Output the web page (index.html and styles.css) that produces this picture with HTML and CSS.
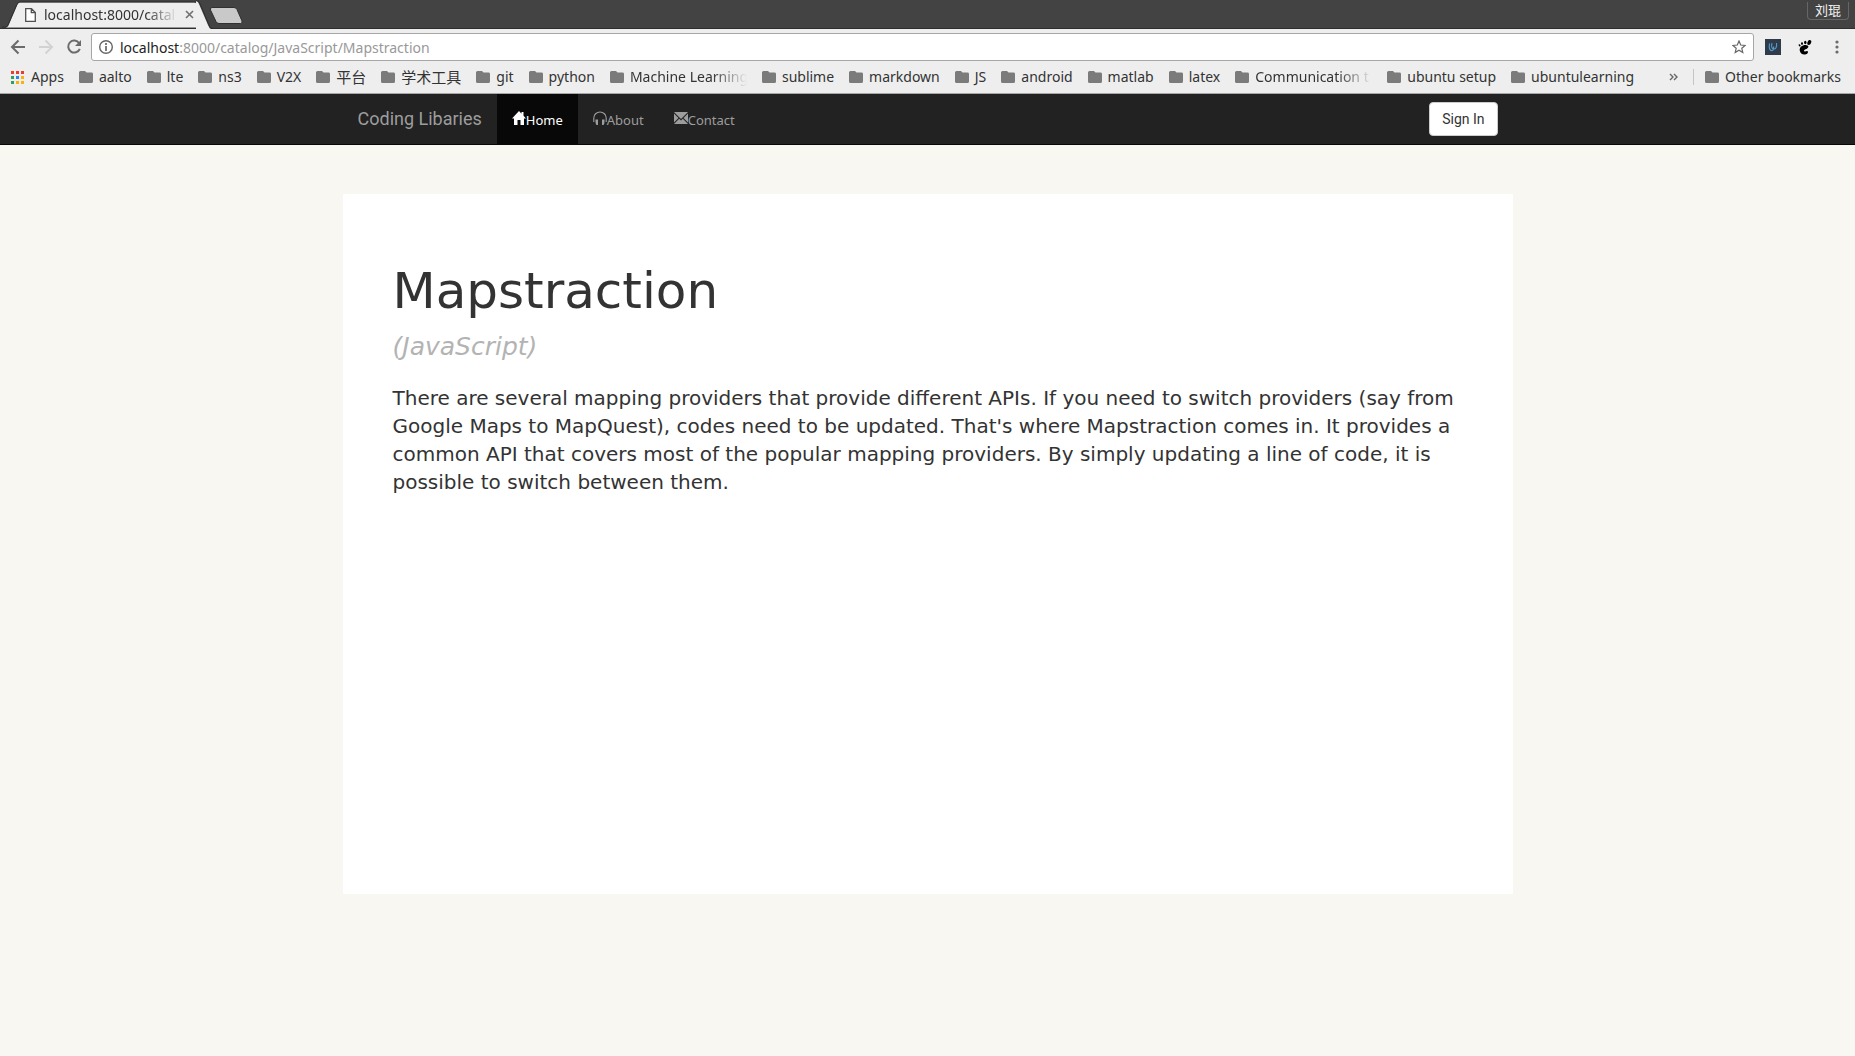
FILE: index.html
```html
<!DOCTYPE html>
<html lang="en">
<head>
<meta charset="utf-8">
<title>localhost:8000/catalog/JavaScript/Mapstraction</title>
<link rel="stylesheet" href="styles.css">
</head>
<body>
<svg class="defs" aria-hidden="true">
  <symbol id="folder" viewBox="0 0 14 12"><path d="M0 1.5Q0 0 1.5 0H6l1.5 1.6h5Q14 1.6 14 3v7.5q0 1.5-1.5 1.5h-11Q0 12 0 10.5z" fill="#7b7b7b"/></symbol>
</svg>
<header class="browser">
  <div class="tabstrip">
    <div class="tab">
      <svg class="tab-shape" width="216" height="29" viewBox="0 0 216 29"><path d="M4 29C7 28 7 27 8 25L17 4Q18 1 20 1H214Q216 1 217 4V29z" fill="#eee"/><path d="M0 28.500H4Q6 28 7 25L16.500 3.500Q18 .5 20 .5H216" fill="none" stroke="#2e2e2e"/></svg>
      <svg class="tab-end" width="20" height="29" viewBox="0 0 20 29"><path d="M0 1H18Q2 1 3 4L12 25Q13 28 15 29H0z" fill="none"/><path d="M0 1Q2 1 3 4L12 25Q13 28 15 29H0z" fill="#eee"/><path d="M0 .5Q3 .5 4 3.500L13 25Q14 28 16 28.500H20" fill="none" stroke="#2e2e2e"/></svg>
      <svg class="doc" width="11" height="14" viewBox="0 0 11 14"><path d="M.7.7H6.500L10.300 4.500V13.300H.7zM6.300.7V4.700H10.300" fill="#fff" stroke="#505050" stroke-width="1.300"/></svg>
      <span class="tab-title">localhost:8000/catal</span>
      <button class="close" aria-label="Close tab"><svg width="9" height="9" viewBox="0 0 9 9"><path d="M1 1l7 7M8 1l-7 7" stroke="#707070" stroke-width="1.600"/></svg></button>
    </div>
    <button class="newtab" aria-label="New tab"><svg width="34" height="17" viewBox="0 0 34 17"><path d="M3 .5H25Q27 .5 28 2.500L33 14Q33.500 16.500 31.500 16.500H10Q8 16.500 7 14.500L1.500 3Q1 .5 3 .5z" fill="#c9c9c9" stroke="#303030"/></svg></button>
    <button class="profile">刘琨</button>
  </div>
  <div class="toolbar">
    <div class="controls">
      <button aria-label="Back"><svg width="16" height="16" viewBox="0 0 16 16"><path d="M15 8H2.500M8.500 1.500L2 8l6.500 6.500" fill="none" stroke="#6b6b6b" stroke-width="2"/></svg></button>
      <button aria-label="Forward"><svg width="16" height="16" viewBox="0 0 16 16"><path d="M1 8h12.500M7.500 1.500L14 8l-6.500 6.500" fill="none" stroke="#d2d2d2" stroke-width="2"/></svg></button>
      <button aria-label="Reload"><svg width="16" height="16" viewBox="0 0 16 16"><path d="M13.200 4.200A6 6 0 1 0 13.800 9.800" fill="none" stroke="#6b6b6b" stroke-width="2"/><path d="M15 1v6H9z" fill="#6b6b6b"/></svg></button>
    </div>
    <div class="omnibox">
      <svg width="14" height="14" viewBox="0 0 14 14"><circle cx="7" cy="7" r="6.300" fill="none" stroke="#666" stroke-width="1.400"/><path d="M7 6v5M7 3v2" stroke="#666" stroke-width="1.700"/></svg>
      <label for="url">localhost</label><input id="url" type="text" value=":8000/catalog/JavaScript/Mapstraction">
      <button aria-label="Bookmark this page"><svg width="14" height="14" viewBox="0 0 14 14"><path d="M7 1l1.700 4 4.400.4-3.300 2.900 1 4.300L7 10.300l-3.800 2.300 1-4.300L.9 5.400 5.300 5z" fill="none" stroke="#666" stroke-width="1.200"/></svg></button>
    </div>
    <div class="controls extensions">
      <button aria-label="Udacity"><svg width="16" height="16" viewBox="0 0 16 16"><path d="M0 0h16v16H0z" fill="#303b49"/><path d="M4.500 4.500C4 8 4 11 6.300 11.500C8.500 12 9 9.500 8.500 7.500M7 4c-.8 3-.5 5.500 1.500 6C11 10.500 12 7.500 11.500 4" fill="none" stroke="#4f9bcc" stroke-width="1.100"/></svg></button>
      <button aria-label="GNOME"><svg width="14" height="15" viewBox="0 0 14 15"><path d="M8.500 5.200C5 4.500 1.300 7 1.700 10.300c.3 3 3 4.700 5.500 4.200 2.300-.4 3.300-2 2.500-3.200-.8-1-1.900.5-3 .2-1.200-.5-.7-1.700.8-2.200C10 8.500 12 5.800 8.500 5.200z"/><ellipse cx="11.300" cy="2.500" rx="1.800" ry="2.600" transform="rotate(25 11.300 2.500)"/><ellipse cx="7.300" cy="2.500" rx="1.200" ry="1.800"/><ellipse cx="4" cy="3.600" rx="1" ry="1.400"/><ellipse cx="1.600" cy="5.400" rx=".9" ry="1.200" transform="rotate(-30 1.600 5.400)"/></svg></button>
      <button aria-label="Menu"><svg width="4" height="14" viewBox="0 0 4 14" fill="#6b6b6b"><circle cx="2" cy="2" r="1.600"/><circle cx="2" cy="7" r="1.600"/><circle cx="2" cy="12" r="1.600"/></svg></button>
    </div>
  </div>
  <nav class="bookmarks" aria-label="Bookmarks">
    <a class="apps" href="#"><svg width="13" height="13" viewBox="0 0 13 13"><path d="M0 0h3v3H0zM5 0h3v3H5zM10 0h3v3h-3z" fill="#ee3b30"/><path d="M0 5h3v3H0zM0 10h3v3H0z" fill="#2da05a"/><path d="M5 5h3v3H5z" fill="#2c86ee"/><path d="M10 5h3v3h-3zM5 10h3v3H5zM10 10h3v3h-3z" fill="#fbb10b"/></svg>Apps</a>
    <a href="#"><svg><use href="#folder"/></svg>aalto</a>
    <a href="#"><svg><use href="#folder"/></svg>lte</a>
    <a href="#"><svg><use href="#folder"/></svg>ns3</a>
    <a href="#"><svg><use href="#folder"/></svg>V2X</a>
    <a href="#"><svg><use href="#folder"/></svg><span class="cjk">平台</span></a>
    <a href="#"><svg><use href="#folder"/></svg><span class="cjk">学术工具</span></a>
    <a href="#"><svg><use href="#folder"/></svg>git</a>
    <a href="#"><svg><use href="#folder"/></svg>python</a>
    <a href="#"><svg><use href="#folder"/></svg><span class="long">Machine Learning</span></a>
    <a href="#"><svg><use href="#folder"/></svg>sublime</a>
    <a href="#"><svg><use href="#folder"/></svg>markdown</a>
    <a href="#"><svg><use href="#folder"/></svg>JS</a>
    <a href="#"><svg><use href="#folder"/></svg>android</a>
    <a href="#"><svg><use href="#folder"/></svg>matlab</a>
    <a href="#"><svg><use href="#folder"/></svg>latex</a>
    <a href="#"><svg><use href="#folder"/></svg><span class="long">Communication t</span></a>
    <a href="#"><svg><use href="#folder"/></svg>ubuntu setup</a>
    <a href="#"><svg><use href="#folder"/></svg>ubuntulearning</a>
    <button class="more" aria-label="More bookmarks"><svg width="9" height="8" viewBox="0 0 9 8"><path d="M1 1l3 3-3 3M5 1l3 3-3 3" fill="none" stroke="#666" stroke-width="1.400"/></svg></button>
    <a class="other" href="#"><svg><use href="#folder"/></svg>Other bookmarks</a>
  </nav>
</header>
<nav class="navbar" aria-label="Main">
  <div class="container">
    <a class="brand" href="#">Coding Libaries</a>
    <ul class="menu">
      <li><a class="active" href="#"><svg width="14" height="14" viewBox="0 0 14 14"><path d="M7 0L0 7.500h2V14h3.500V9h3v5H12V7.500h2L11.500 4.800V1h-2v1.700z"/></svg>Home</a></li>
      <li><a href="#"><svg width="14" height="14" viewBox="0 0 14 14"><path d="M.8 11V7a6.200 6 0 0 1 12.400 0v4" fill="none" stroke="currentColor" stroke-width="1.100"/><path d="M2.500 8.500H5V14H3.500Q2.500 13 2.500 11zM9 8.500h2.500V11q0 2-1 3H9z"/></svg>About</a></li>
      <li><a href="#"><svg width="14" height="14" viewBox="0 0 14 14"><path d="M0 1h14L7 8zM0 2.500L4.500 7 0 11.500zM14 2.500L9.500 7l4.500 4.500zM0 13l5.200-5.300L7 9.500l1.800-1.800L14 13z"/></svg>Contact</a></li>
    </ul>
    <button class="signin">Sign In</button>
  </div>
</nav>
<main class="card">
  <h1>Mapstraction</h1>
  <p class="language">(JavaScript)</p>
  <p class="description">There are several mapping providers that provide different APIs. If you need to switch providers (say from Google Maps to MapQuest), codes need to be updated. That's where Mapstraction comes in. It provides a common API that covers most of the popular mapping providers. By simply updating a line of code, it is possible to switch between them.</p>
</main>
</body>
</html>
```
FILE: styles.css
```css
* { box-sizing: border-box; }
body { margin: 0; background: #f8f7f2; color: #333; font-family: "DejaVu Sans", sans-serif; }
button { margin: 0; padding: 0; border: 0; background: none; font: inherit; color: inherit; }
a { color: inherit; text-decoration: none; }
svg { display: block; flex: none; }
.defs { position: absolute; width: 0; height: 0; }

.browser { background: #eee; font-family: "Noto Sans", "Noto Sans CJK SC", sans-serif; font-size: 14px; border-bottom: 1px solid #a6a6a6; }
.tabstrip { display: flex; height: 29px; background: #434343; border-bottom: 1px solid #2e2e2e; }
.tab { position: relative; display: flex; align-items: center; width: 209px; height: 29px; padding-left: 25px; }
.tab-shape, .tab-end { position: absolute; top: 0; left: 2px; }
.tab-shape { width: 194px; clip-path: inset(0); }
.tab-end { left: 196px; }
.doc, .tab-title, .close { position: relative; }
.tab-title { width: 133px; margin-left: 8px; white-space: nowrap; mask-image: linear-gradient(90deg, #000 102px, transparent 134px); }
.close { margin-left: 8px; }
.newtab { height: 17px; margin-top: 7px; }
.profile { height: 18px; margin: 2px 6px 0 auto; padding: 0 7px; border: 1px solid #666; border-top: 0; border-radius: 0 0 4px 4px; color: #f2f2f2; font-size: 13px; line-height: 17px; }

.toolbar { display: flex; align-items: center; gap: 9px; height: 36px; padding: 0 8px 0 10px; }
.controls { display: flex; align-items: center; gap: 12px; }
.extensions button { display: flex; justify-content: center; width: 20px; }
.omnibox { display: flex; flex: 1; align-items: center; height: 28px; padding: 0 7px; border: 1px solid #a6a6a6; border-radius: 3px; background: #fff; }
.omnibox label { margin-left: 7px; color: #222; }
.omnibox input { flex: 1; min-width: 0; padding: 0; border: 0; outline: 0; background: none; color: #999; font: inherit; }

.bookmarks { display: flex; align-items: center; gap: 15px; height: 28px; padding: 0 14px 4px 11px; color: #333; white-space: nowrap; }
.bookmarks a { display: flex; align-items: center; gap: 6px; line-height: 24px; }
.bookmarks a svg { width: 14px; height: 12px; }
.bookmarks .apps { gap: 7px; }
.bookmarks .apps svg { width: 13px; height: 13px; }
.cjk { font-size: 15px; }
.long { width: 117px; overflow: hidden; mask-image: linear-gradient(90deg, #000 82px, transparent 117px); }
.more { margin-left: auto; }
.bookmarks .other { height: 16px; padding-left: 11px; border-left: 1px solid #c4c4c4; }

.navbar { background: #222; border-bottom: 1px solid #080808; color: #9d9d9d; }
.container { display: flex; align-items: center; max-width: 1170px; height: 50px; margin: 0 auto; padding: 0 15px; }
.brand { margin-right: 15px; font: 18px/20px Roboto, sans-serif; }
.menu { display: flex; margin: 0; padding: 0; list-style: none; font: 13px/20px "Noto Sans", sans-serif; }
.menu a { display: flex; align-items: baseline; height: 50px; padding: 16px 15px 0; }
.menu svg { fill: currentColor; }
.menu .active { background: #080808; color: #fff; }
.signin { height: 34px; margin-left: auto; padding: 0 12px; border: 1px solid #ccc; border-radius: 4px; background: #fff; color: #333; font: 14px/20px Roboto, sans-serif; }

.card { max-width: 1170px; min-height: 700px; margin: 49px auto; padding: 69px 50px; background: #fff; }
h1 { margin: 0; font-size: 50px; font-weight: 400; line-height: 56px; }
.language { margin: 11px 0 20px; color: #b3b3b3; font-size: 25px; font-style: italic; line-height: 34px; }
.description { margin: 0; font-size: 20px; line-height: 28px; }
```
